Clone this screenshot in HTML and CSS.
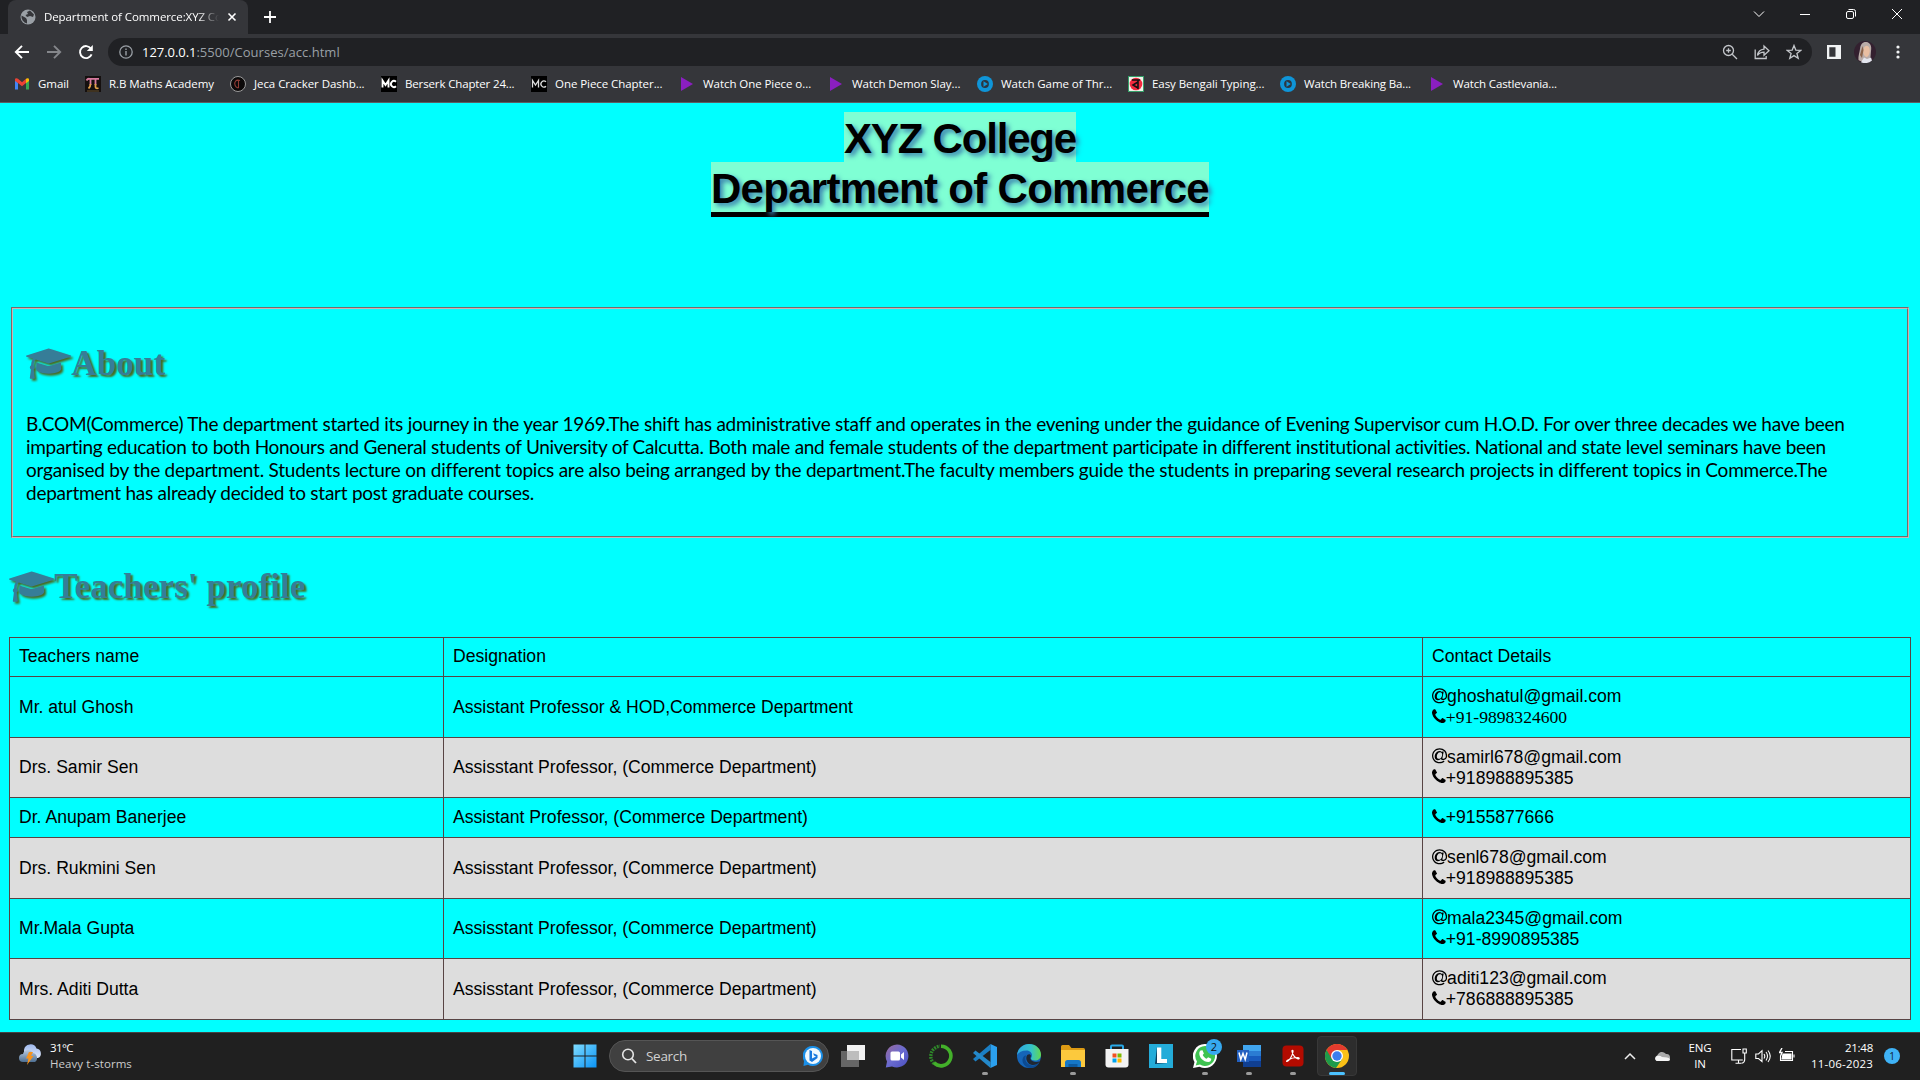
FILE: index.html
```html
<!DOCTYPE html>
<html lang="en">
<head>
<meta charset="utf-8">
<title>Department of Commerce:XYZ College</title>
<link rel="stylesheet" href="styles.css">
</head>
<body>
<svg width="0" height="0" class="defs">
  <symbol id="cap" viewBox="0 0 2304 1792"><path d="M1774 836l18 316q4 69-82 128t-235 93.500-323 34.500-323-34.500-235-93.500-82-128l18-316 574 181q22 7 48 7t48-7zM2304 512q0 23-22 31l-1120 352q-4 1-10 1t-10-1l-652-206q-43 34-71 111.500t-34 178.500q63 36 63 109 0 69-58 107l58 433q2 14-8 25-9 11-24 11h-192q-15 0-24-11-10-11-8-25l58-433q-58-38-58-107 0-73 65-111 11-207 98-330l-333-104q-22-8-22-31t22-31l1120-352q4-1 10-1t10 1l1120 352q22 8 22 31z"/></symbol>
  <symbol id="phone" viewBox="192 0 1408 1792"><path d="M1600 1240q0 27-10 70.500t-21 68.500q-21 50-122 106-94 51-186 51-27 0-53-3.500t-57.500-12.500-47-14.500-55.500-20.500-49-18q-98-35-175-83-127-79-264-216t-216-264q-48-77-83-175-3-9-18-49t-20.500-55.500-14.500-47-12.500-57.500-3.500-53q0-92 51-186 56-101 106-122 25-11 68.500-21t70.500-10q14 0 21 3 18 6 53 76 11 19 30 54t35 63.500 31 53.500q3 4 17.500 25t21.500 35.500 7 28.500q0 20-28.500 50t-62 55-62 53-28.500 46q0 9 5 22.500t8.500 20.500 14 24 11.500 19q76 137 174 235t235 174q2 1 19 11.500t24 14 20.500 8.500 22.500 5q18 0 46-28.500t53-62 55-62 50-28.500q14 0 28.500 7t35.500 21.500 25 17.500q25 15 53.500 31t63.500 35 54 30q70 35 76 53 3 7 3 21z"/></symbol>
  <symbol id="at" viewBox="128 0 1536 1792"><path d="M1164 772q0-108-53.500-169t-147.500-61q-63 0-124 30.500t-110 84.500-79.500 137-30.500 180q0 112 53.500 173t150.500 61q96 0 176-66.500t122.500-166 42.500-203.500zM1664 896q0 111-37 197t-98.500 135-131.500 74.500-145 27.500q-6 0-15.500.5t-16.500.5q-95 0-142-53-28-33-33-83-52 66-131.500 110t-173.500 44q-161 0-249.500-95.500t-88.500-269.500q0-157 66-290t179-210.500 246-77.500q87 0 155 35.500t106 99.500l2-19 11-56q1-6 5.500-12t9.500-6h118q5 0 13 11 5 5 3 16l-120 614q-5 24-5 48 0 39 12.500 52t44.500 13q28-1 57-5.500t73-24 77-50 57-89.500 24-137q0-292-174-466t-466-174q-130 0-248.500 51t-204 136.500-136.500 204-51 248.500 51 248.500 136.500 204 204 136.500 248.500 51q228 0 405-144 11-9 24-8t21 12l41 49q8 12 7 24-2 13-12 22-102 83-227.500 128t-258.500 45q-156 0-298-61t-245-164-164-245-61-298 61-298 164-245 245-164 298-61q344 0 556 212t212 556z"/></symbol>
  <symbol id="play" viewBox="0 0 16 16"><path d="M2 1l12 7-12 7z" fill="#8a1fc0"/></symbol>
  <symbol id="ring" viewBox="0 0 16 16"><circle cx="8" cy="8" r="8" fill="#0f95d8"/><circle cx="8" cy="8" r="3.900" fill="#2c3640"/><path d="M6.500 5.300L10.800 8l-4.300 2.700z" fill="#0f95d8"/></symbol>
</svg>

<header class="tabstrip">
  <div class="tab">
    <svg class="i16" viewBox="0 0 16 16"><circle cx="8" cy="8" r="7.500" fill="#9aa0a6"/><path d="M1.500 6.500L6 9l1 2v3.500A7 7 0 0 1 1.500 6.500zM7 3l3-1.500 4 4-1 2.500-3-1-3 1L5.500 6 8 5z" fill="#35363a"/></svg>
    <span class="title">Department of Commerce:XYZ Co</span>
    <svg class="close" viewBox="0 0 10 10"><path d="M1.500 1.500l7 7M8.500 1.500l-7 7" stroke="#fff" stroke-width="1.600"/></svg>
  </div>
  <svg class="plus" viewBox="0 0 12 12"><path d="M6 0v12M0 6h12" stroke="#fff" stroke-width="1.800"/></svg>
  <div class="winbtns">
    <svg viewBox="0 0 12 12"><path d="M1 3.500l5 5 5-5" /></svg>
    <svg viewBox="0 0 12 12"><path d="M1 6.500h10"/></svg>
    <svg viewBox="0 0 12 12"><rect x="1.500" y="3.500" width="7" height="7" rx="1.500"/><path d="M3.500 1.500h5a2 2 0 0 1 2 2v5"/></svg>
    <svg viewBox="0 0 12 12"><path d="M1 1l10 10M11 1L1 11"/></svg>
  </div>
</header>

<div class="toolbar">
  <div class="nav">
    <svg viewBox="0 0 16 16"><path d="M15 8H2M8 1.800L1.800 8 8 14.200" stroke="#fff"/></svg>
    <svg viewBox="0 0 16 16"><path d="M1 8h13M8 1.800L14.200 8 8 14.200" stroke="#85878b"/></svg>
    <svg viewBox="0 0 16 16"><path d="M13.600 10.300A6 6 0 1 1 13 4.700" stroke="#fff"/><path d="M14.800 1v6h-6z" fill="#fff"/></svg>
  </div>
  <div class="omnibox">
    <svg class="i14" viewBox="0 0 14 14"><circle cx="7" cy="7" r="6.200" fill="none" stroke="#9aa0a6" stroke-width="1.300"/><path d="M7 6v4.500M7 3.500v1.400" stroke="#9aa0a6" stroke-width="1.400"/></svg>
    <span class="url"><b>127.0.0.1</b>:5500/Courses/acc.html</span>
    <div class="omni-actions">
      <svg viewBox="0 0 16 16"><circle cx="6.500" cy="6.500" r="5"/><path d="M10.200 10.200L15 15M4.200 6.500h4.600M6.500 4.200v4.600"/></svg>
      <svg viewBox="0 0 16 16"><path d="M1.200 5.500v9h11V12M3.500 11.500c.5-4 3-6 6.500-6.300V2l5 4.700-5 4.500V8.200c-3 0-5 1-6.500 3.300z"/></svg>
      <svg viewBox="0 0 16 16"><path d="M8 1.500l1.800 4.600 4.900.3-3.800 3.100 1.300 4.800L8 11.600l-4.200 2.700 1.300-4.800L1.300 6.400l4.900-.3z"/></svg>
    </div>
  </div>
  <svg class="panel" viewBox="0 0 14 14"><path d="M0 0h14v14H0zM2.300 2.300v9.400h6.200V2.300z" fill="#f1f3f4" fill-rule="evenodd"/></svg>
  <svg class="avatar" viewBox="0 0 22 22"><circle cx="11" cy="11" r="11" fill="#33202f"/><path d="M4.500 19c-.5-4 1-7 1.500-11C6.500 3 9 .5 12.500 1c3.500.5 5.500 4 4.500 9l-.5 6c-1 5-8 6-12 3z" fill="#b9aca8"/><path d="M9.500 8c1-4 5-4.500 6-.5 1 4-1 8.500-3 8.500s-4-4-3-8z" fill="#e9bfa2"/><path d="M7 21.300l3-4.800 3 1.500 4-1.500 1 3a11 11 0 0 1-11 1.800z" fill="#e3e6ee"/><path d="M6 14l2.500-9 1 4-1.500 8z" fill="#8a6248"/></svg>
  <svg class="dots" viewBox="0 0 4 14"><circle cx="2" cy="2" r="1.600"/><circle cx="2" cy="7" r="1.600"/><circle cx="2" cy="12" r="1.600"/></svg>
</div>

<nav class="bookmarks">
  <a><svg viewBox="0 0 16 16"><path d="M1 3v10.500h3V7z" fill="#4285f4"/><path d="M15 3v10.500h-3V7z" fill="#34a853"/><path d="M1 3.500C1 2 3 1.800 4 2.800l4 3.400 4-3.400V7l-4 3.200L4 7 1 5z" fill="#ea4335"/><path d="M12 2.800c1-1 3-.8 3 .7V5l-3 2.200z" fill="#fbbc04"/></svg><span>Gmail</span></a>
  <a><svg viewBox="0 0 16 16"><path d="M0 0h16v16H0z" fill="#15100f"/><path d="M1.500 4.500Q2.500 2.500 4.500 2.800H14M5.500 3v6M10.500 3v6" fill="none" stroke="#d77ba0" stroke-width="1.800"/><path d="M5.500 8q0 3-2 4.500M10.500 8v3q.5 2 3 1" stroke="#e0a14a" stroke-width="1.800" fill="none"/><path d="M2 15h12" stroke="#6b5530"/></svg><span>R.B Maths Academy</span></a>
  <a><svg viewBox="0 0 16 16"><circle cx="8" cy="8" r="7.500" fill="#0b0909" stroke="#a8a8a8" stroke-width=".9"/><path d="M10 4.500C6 3 4 6 5 9s3 3 4 2.500M8.500 4v8" fill="none" stroke="#8d3b34" stroke-width="1.100"/></svg><span>Jeca Cracker Dashb...</span></a>
  <a class="tight"><svg viewBox="0 0 16 16"><path d="M0 0h16v16H0z" fill="#000"/><path d="M1.500 11.500v-7L4.500 9l3-4.500v7M15 5.800a3 3 0 1 0 0 4.400" fill="none" stroke="#fff" stroke-width="1.900"/></svg><span>Berserk Chapter 24...</span></a>
  <a><svg viewBox="0 0 16 16"><path d="M0 0h16v16H0z" fill="#000"/><path d="M1.500 11.500v-7L4.500 9l3-4.500v7M15 5.800a3 3 0 1 0 0 4.400" fill="none" stroke="#ddd" stroke-width="1.300"/></svg><span>One Piece Chapter...</span></a>
  <a><svg><use href="#play"/></svg><span>Watch One Piece o...</span></a>
  <a><svg><use href="#play"/></svg><span>Watch Demon Slay...</span></a>
  <a><svg><use href="#ring"/></svg><span>Watch Game of Thr...</span></a>
  <a><svg viewBox="0 0 16 16"><path d="M0 0h16v16H0z" fill="#35a06a"/><path d="M1 1h14v14H1z" fill="#f2f2ea"/><circle cx="8" cy="8" r="6.300" fill="#f22a3f"/><path d="M4 4h8M10 4v9M10 6L5 9l5 3" fill="none" stroke="#111" stroke-width="1.600"/></svg><span>Easy Bengali Typing...</span></a>
  <a class="tight"><svg><use href="#ring"/></svg><span>Watch Breaking Ba...</span></a>
  <a class="tight"><svg><use href="#play"/></svg><span>Watch Castlevania...</span></a>
</nav>

<main class="page">
  <h1 class="college"><span class="l1">XYZ College</span><span class="l2">Department of Commerce</span></h1>
  <section class="about">
    <h2><svg class="capicon"><use href="#cap"/></svg><span>About</span></h2>
    <p>
      <span class="p1">B.COM(Commerce) The department started its journey in the year 1969.The shift has administrative staff and operates in the evening under the guidance of Evening Supervisor cum H.O.D. For over three decades we have been</span>
      <span class="p2">imparting education to both Honours and General students of University of Calcutta. Both male and female students of the department participate in different institutional activities. National and state level seminars have been</span>
      <span class="p3">organised by the department. Students lecture on different topics are also being arranged by the department.The faculty members guide the students in preparing several research projects in different topics in Commerce.The</span>
      <span class="p4">department has already decided to start post graduate courses.</span>
    </p>
  </section>
  <h2 class="profile"><svg class="capicon"><use href="#cap"/></svg><span>Teachers' profile</span></h2>
  <table>
    <colgroup><col class="c1"><col class="c2"><col class="c3"></colgroup>
    <tr class="short head"><td>Teachers name</td><td>Designation</td><td>Contact Details</td></tr>
    <tr><td>Mr. atul Ghosh</td><td>Assistant Professor &amp; HOD,Commerce Department</td><td><svg class="at"><use href="#at"/></svg>ghoshatul@gmail.com<br><svg class="ph"><use href="#phone"/></svg><span class="serif">+91-9898324600</span></td></tr>
    <tr class="alt mid"><td>Drs. Samir Sen</td><td>Assisstant Professor, (Commerce Department)</td><td><svg class="at"><use href="#at"/></svg>samirl678@gmail.com<br><svg class="ph"><use href="#phone"/></svg>+918988895385</td></tr>
    <tr class="short s2"><td>Dr. Anupam Banerjee</td><td>Assistant Professor, (Commerce Department)</td><td><svg class="ph"><use href="#phone"/></svg>+9155877666</td></tr>
    <tr class="alt"><td>Drs. Rukmini Sen</td><td>Assisstant Professor, (Commerce Department)</td><td><svg class="at"><use href="#at"/></svg>senl678@gmail.com<br><svg class="ph"><use href="#phone"/></svg>+918988895385</td></tr>
    <tr class="mid"><td>Mr.Mala Gupta</td><td>Assisstant Professor, (Commerce Department)</td><td><svg class="at"><use href="#at"/></svg>mala2345@gmail.com<br><svg class="ph"><use href="#phone"/></svg>+91-8990895385</td></tr>
    <tr class="alt"><td>Mrs. Aditi Dutta</td><td>Assisstant Professor, (Commerce Department)</td><td><svg class="at"><use href="#at"/></svg>aditi123@gmail.com<br><svg class="ph"><use href="#phone"/></svg>+786888895385</td></tr>
  </table>
</main>

<footer class="taskbar">
  <div class="weather">
    <svg viewBox="0 0 24 24"><defs><linearGradient id="wc" x1="0" y1="0" x2="0" y2="1"><stop offset="0" stop-color="#9fb9ee"/><stop offset="1" stop-color="#dfe8f8"/></linearGradient><linearGradient id="wd" x1="0" y1="0" x2="0" y2="1"><stop offset="0" stop-color="#b9cbe2"/><stop offset="1" stop-color="#4d6f92"/></linearGradient></defs><path d="M8 14a6 6 0 0 1-3-6 6.500 6.500 0 0 1 12.500-1.500A5 5 0 0 1 19 16H9z" fill="url(#wc)"/><path d="M4 20a4 4 0 0 1 0-8 5 5 0 0 1 9.500-1A5 5 0 0 1 16 20z" fill="url(#wd)"/><path d="M10 10h4l-2 4h2.500L8 23l1.500-6.500H7z" fill="#f7941e"/></svg>
    <div><span class="temp">31°C</span><br><span class="dim">Heavy t-storms</span></div>
  </div>
  <div class="center">
    <svg class="start" viewBox="0 0 24 24"><defs><linearGradient id="wg" x1="0" y1="0" x2="1" y2="1"><stop offset="0" stop-color="#7fdcff"/><stop offset="1" stop-color="#0a93f5"/></linearGradient></defs><path d="M.5.500h11v11H.5zM12.500.500h11v11h-11zM.5 12.500h11v11H.5zM12.500 12.500h11v11h-11z" fill="url(#wg)"/></svg>
    <div class="search">
      <svg class="i16" viewBox="0 0 16 16"><circle cx="7" cy="6.500" r="5.300" fill="none" stroke="#e4e4e4" stroke-width="1.600"/><path d="M10.800 10.500L15 15" stroke="#e4e4e4" stroke-width="1.800"/></svg>
      <span>Search</span>
      <svg class="bing" viewBox="0 0 20 20"><path d="M10 0a10 10 0 1 1-5 18.700L.5 20 1 15A10 10 0 0 1 10 0z" fill="#1a8fe8"/><circle cx="10" cy="10" r="8" fill="#eef8ff"/><path d="M6.500 4l2.500 1v7.500l4-2-2-1-.8-2.200 4.300 1.600v3L9 16l-2.500-1.600z" fill="#1577dd"/></svg>
    </div>
    <div class="apps">
      <span class="app"><svg viewBox="0 0 24 24"><path d="M6 1h18v15H6z" fill="#f2f2f2"/><path d="M0 7h18v16H0z" fill="#666"/><path d="M6 7h12v9H6z" fill="#bdbdbd"/></svg></span>
      <span class="app"><svg viewBox="0 0 24 24"><defs><linearGradient id="tm" x1="0" y1="0" x2="1" y2="1"><stop offset="0" stop-color="#9b6a9c"/><stop offset=".5" stop-color="#6a6bd0"/><stop offset="1" stop-color="#4a4fc0"/></linearGradient></defs><path d="M12 .5a11.500 11.500 0 1 1-5 21.900L.8 23.500 2 17.500A11.500 11.500 0 0 1 12 .5z" fill="url(#tm)"/><rect x="5.500" y="7.500" width="9.500" height="9" rx="1.500" fill="#fff"/><path d="M16 10.500l3-2.500v8l-3-2.500z" fill="#fff"/></svg></span>
      <span class="app"><svg viewBox="0 0 24 24"><path d="M5 19.500A10 10 0 0 1 11 2.200" fill="none" stroke="#2f8a2a" stroke-width="3.400" stroke-dasharray="1.800 1"/><path d="M12 2.200a9.800 9.800 0 1 1-7 16.600" fill="none" stroke="#43b02a" stroke-width="3.600"/></svg></span>
      <span class="app run"><svg viewBox="0 0 24 24"><path d="M17.500 0v6L2.500 17.500 0 15z" fill="#1b7fc4"/><path d="M17.500 24v-6L2.500 6.500 0 9z" fill="#2489ca"/><path d="M17.500 0L24 3v18l-6.500 3z" fill="#2ba0ee"/></svg></span>
      <span class="app"><svg viewBox="0 0 24 24"><defs><linearGradient id="eg" x1="0" y1=".3" x2="1" y2=".3"><stop offset="0" stop-color="#2fa8e0"/><stop offset=".6" stop-color="#35c3c8"/><stop offset="1" stop-color="#62d84f"/></linearGradient></defs><circle cx="12" cy="12" r="12" fill="#1565b8"/><path d="M0 11C1 4 6 0 12 0c7 0 12 5 12 10.500 0 4-3 6-6 6-2.500 0-4-1-4-2s1-1.500 1-3.500S13 6.500 9.500 6.500C5 6.500 1.500 8.500 0 11z" fill="url(#eg)"/><path d="M9 11.500C7 16 10 21 15 21.500c3 .3 6-1.500 7.500-3.500-2 5-6 6-9 6C8 23.500 5 19 5.500 15.500 6 12.500 8 11 9 11.500z" fill="#0c4a91"/><path d="M13.500 15c2 3.500 6 3.500 9.500 2.300-2 3.200-5.500 4-8 3.700-4-.6-6.500-5-5.500-8.500.5-1.500 2-2.500 3.500-2 2 1 0 3 .5 4.500z" fill="#202833"/></svg></span>
      <span class="app run"><svg viewBox="0 0 24 24"><path d="M0 2.500Q0 1 1.500 1H8l2.500 3H22.500Q24 4 24 5.500V12H0z" fill="#dd9b14"/><path d="M0 6h24v17H0z" fill="#fcc93d"/><path d="M4 23v-4.500Q4 16 6.500 16h11q2.500 0 2.500 2.500V23z" fill="#1577c7"/><path d="M7.500 20h9v3h-9z" fill="#0c5a9f"/></svg></span>
      <span class="app"><svg viewBox="0 0 24 24"><path d="M6 6V2.500Q6 1.500 7 1.500h10q1 0 1 1V6" fill="none" stroke="#29a9e8" stroke-width="2"/><path d="M.5 5h23v15.500q0 3-3 3h-17q-3 0-3-3z" fill="#f3f3f3"/><path d="M7.500 9.500h4v4h-4z" fill="#f25022"/><path d="M12.500 9.500h4v4h-4z" fill="#7fba00"/><path d="M7.500 14.500h4v4h-4z" fill="#00a4ef"/><path d="M12.500 14.500h4v4h-4z" fill="#ffb900"/></svg></span>
      <span class="app"><svg viewBox="0 0 24 24"><path d="M0 0h24v24H0z" fill="#24acd9"/><path d="M8 3L6 20l12-1-9-2z" fill="#0e3e5c"/><path d="M8 3.500h4.300V15H18v4H8z" fill="#fff"/></svg></span>
      <span class="app run"><svg viewBox="0 0 24 24"><path d="M12 0a12 12 0 1 1-5.500 22.700L0 24l1.500-6A12 12 0 0 1 12 0z" fill="#fff"/><path d="M12 2a10 10 0 1 1-5 18.600L2.700 21.500 4 17.500A10 10 0 0 1 12 2z" fill="#3fc351"/><path d="M7.500 6.500l2-.3 1.400 3.200-1.200 1.500c1 2 2.200 3 4 3.800l1.400-1.500 3.200 1.500c0 2-1.300 3.300-3 3.300-5 0-9-4.500-9-8.500 0-1.300.5-2.400 1.200-3z" fill="#fff"/></svg><i class="badge">2</i></span>
      <span class="app run"><svg viewBox="0 0 24 24"><path d="M6 1h18v6H6z" fill="#41a5ee"/><path d="M6 7h18v5H6z" fill="#2b7cd3"/><path d="M6 12h18v5H6z" fill="#185abd"/><path d="M6 17h18v6H6z" fill="#103f91"/><path d="M0 6h12v12H0z" fill="#2360c0"/><path d="M2 8.500l1.800 7L6 9.500l2.200 6 1.800-7" fill="none" stroke="#fff" stroke-width="1.500"/></svg></span>
      <span class="app run"><svg viewBox="0 0 24 24"><rect x="1.500" y="1.500" width="21" height="21" rx="4" fill="#b30b00"/><path d="M6 17.500c2-.5 5.500-5.500 6-10 .2-1.700-1.300-1.500-1 0 .6 3.500 3.500 6.800 6 7.300 1.800.2 1.500-1.300-.5-1.300-3.500 0-7 1-9.500 2.500-1.500 1-1.800 1.500-1 1.500z" fill="none" stroke="#fff" stroke-width="1.200"/></svg></span>
      <span class="app active"><svg viewBox="0 0 24 24"><circle cx="12" cy="12" r="12" fill="#fbc116"/><path d="M12 12L1.600 6A12 12 0 0 0 11 24l6.200-9z" fill="#1e9b4b"/><path d="M1.600 6A12 12 0 0 1 22.400 6H12v6l-5.200 3z" fill="#e33b2e"/><circle cx="12" cy="12" r="6" fill="#fff"/><circle cx="12" cy="12" r="4.700" fill="#3b7ded"/></svg></span>
    </div>
  </div>
  <div class="tray">
    <svg class="chev" viewBox="0 0 12 8"><path d="M1 7l5-5 5 5" fill="none" stroke="#eee" stroke-width="1.500"/></svg>
    <svg class="cloud" viewBox="0 0 16 10"><path d="M3.500 10a3.500 3.500 0 0 1 0-6A5 5 0 0 1 12 3a3.500 3.500 0 0 1 1 7z" fill="#aaa"/><path d="M2.500 10a2.700 2.700 0 0 1 .5-5q3-1 5 1l5 .5q3 .5 3 2T13.500 10z" fill="#f4f4f4"/></svg>
    <div class="lang">ENG<br>IN</div>
    <svg class="i16" viewBox="0 0 16 16"><path d="M10 1.500H.8v10.500h11M4.500 15.200h6M7.500 12v3" /><path d="M12 1h3.300v4H12zM13.700 5v6.500q0 3-3 3.700"/></svg>
    <svg class="i16" viewBox="0 0 16 16"><path d="M.8 6v4.500h2.700L7 13.500V2.700L3.500 6zM9 6q1.500 2.200 0 4.500M11 4q3 4 0 8.500M13 2.500q4.500 5.500 0 11.500"/></svg>
    <svg class="i16" viewBox="0 0 16 16"><path d="M6 3.500h7.500v9H1.500V8"/><path d="M4 6h8v5H3z" fill="#fff"/><path d="M15 6.500v3"/><path d="M3 0L.5 4.500H3L1.500 8" stroke-width="1.400"/></svg>
    <div class="clock"><span class="time">21:48</span><br><span class="date">11-06-2023</span></div>
    <span class="note">1</span>
  </div>
</footer>
</body>
</html>
```
FILE: styles.css
```css
* { box-sizing: border-box; }
html, body { margin: 0; padding: 0; }
body { width: 1920px; height: 1080px; overflow: hidden; display: flex; flex-direction: column; background: #0ff; color: #000; font-family: "Open Sans", "Noto Sans", sans-serif; }
svg { display: block; flex: none; }
.defs { position: absolute; }
.i16 { width: 16px; height: 16px; }
.i14 { width: 14px; height: 14px; }

/* browser chrome */
.tabstrip { flex: none; height: 34px; background: #202124; display: flex; align-items: center; padding-left: 8px; }
.tab { width: 240px; height: 34px; background: #35363a; border-radius: 8px 8px 0 0; display: flex; align-items: center; padding: 0 11px 0 12px; gap: 8px; color: #fff; font-size: 11.5px; }
.title { flex: 1; overflow: hidden; white-space: nowrap; letter-spacing: -0.09px; padding-bottom: 1px; -webkit-mask-image: linear-gradient(90deg, #000 88%, transparent); mask-image: linear-gradient(90deg, #000 88%, transparent); }
.close { width: 10px; height: 10px; }
.plus { width: 12px; height: 12px; margin-left: 16px; }
.winbtns { margin-left: auto; display: flex; gap: 34px; padding: 0 17px 6px 0; }
.winbtns svg { width: 12px; height: 12px; fill: none; stroke: #fff; stroke-width: 1; }
.toolbar { flex: none; height: 36px; background: #35363a; display: flex; align-items: center; padding: 0 20px 0 14px; }
.nav { display: flex; gap: 16px; width: 94px; }
.nav svg { width: 16px; height: 16px; fill: none; stroke-width: 1.9; }
.omnibox { width: 1704px; height: 28px; border-radius: 14px; background: #202124; display: flex; align-items: center; padding: 0 10px 0 11px; gap: 9px; }
.url { color: #9aa0a6; font-size: 13px; letter-spacing: 0.03px; white-space: nowrap; }
.url b { font-weight: 400; color: #fff; letter-spacing: -0.05px; }
.omni-actions { margin-left: auto; display: flex; gap: 16px; }
.omni-actions svg { width: 16px; height: 16px; fill: none; stroke: #c3c6ca; stroke-width: 1.3; }
.panel { width: 14px; height: 14px; margin-left: 15px; }
.avatar { width: 22px; height: 22px; margin-left: 13px; }
.dots { width: 4px; height: 14px; margin-left: auto; fill: #f1f3f4; }
.bookmarks { flex: none; height: 33px; background: #35363a; border-bottom: 1px solid #5c5d62; padding: 0 0 4px 14px; display: grid; grid-template-columns: 71px 145px 151px 150px 148px 149px 149px 151px 152px 149px 150px; align-items: center; color: #fff; font-size: 11.5px; letter-spacing: -0.06px; }
.bookmarks a { display: flex; align-items: center; gap: 8px; white-space: nowrap; }
.bookmarks span { padding-bottom: 2px; }
.bookmarks .tight { letter-spacing: -0.14px; }
.bookmarks svg { width: 16px; height: 16px; }

/* page */
.page { flex: 1; padding: 9px 9px 0; display: flex; flex-direction: column; overflow: hidden; }
.college { margin: 0; display: flex; flex-direction: column; align-items: center; font: bold 42px/53px "Liberation Sans", sans-serif; text-shadow: 3px 3px 5px #3a7fae; white-space: nowrap; }
.college span { display: block; height: 50px; background: #7fffd4; }
.college .l1 { letter-spacing: -1.19px; }
.college .l2 { height: 55px; border-bottom: 5px solid #000; letter-spacing: -0.7px; }
.about { margin: 90px 2px 0; height: 231px; border: 2px groove #cdb4b4; padding: 35px 13px 0; }
h2 { margin: 0; display: flex; align-items: center; font: bold 35.2px/40px "Liberation Serif", serif; color: #367d98; text-shadow: 2px 2px 2px #4a6a20; white-space: nowrap; }
.capicon { width: 45.3px; height: 35.2px; fill: #367d98; filter: drop-shadow(2px 2px 1px #4a6a20); }
.about p { margin: 28px 0 0; font: 19px/23px Lato, sans-serif; }
.about p span { display: table; white-space: nowrap; }
.p1 { letter-spacing: -0.246px; }
.p2 { letter-spacing: -0.301px; }
.p3 { letter-spacing: -0.236px; }
.p4 { letter-spacing: -0.256px; }
.profile { margin-top: 29px; }
table { margin-top: 30px; width: 1902px; border-collapse: collapse; table-layout: fixed; font: 17.6px/21px "Liberation Sans", sans-serif; }
.c1 { width: 434px; }
.c2 { width: 979px; }
td { border: 1px solid #584444; padding: 0 9px; height: 61px; white-space: nowrap; }
.short td { height: 39px; }
.head td { padding-bottom: 2px; }
.s2 td { height: 40px; }
.mid td { height: 60px; }
.alt { background: #ddd; }
td svg { display: inline-block; vertical-align: -2.5px; height: 17.6px; }
.at { width: 15.1px; }
.ph { width: 13.8px; }
.serif { font-family: "Liberation Serif", serif; }

/* taskbar */
.taskbar { flex: none; height: 48px; background: #202020; border-top: 1px solid #444; display: flex; color: #fff; font-size: 11.5px; line-height: 16px; }
.weather { display: flex; gap: 7px; padding: 7px 0 0 19px; width: 573px; }
.weather svg { width: 24px; height: 24px; margin-top: 2px; }
.temp { letter-spacing: -0.58px; }
.dim { color: #ccc; letter-spacing: 0.07px; }
.center { display: flex; align-items: center; padding-bottom: 1px; }
.start { width: 24px; height: 24px; }
.search { width: 220px; height: 32px; margin-left: 12px; border-radius: 16px; background: #404040; border: 1px solid #555; display: flex; align-items: center; padding: 0 5px 0 11px; gap: 9px; font-size: 13.5px; letter-spacing: -0.29px; color: #d2d2d2; }
.bing { width: 20px; height: 20px; margin-left: auto; }
.apps { display: flex; gap: 4px; margin-left: 4px; }
.app { position: relative; width: 40px; height: 40px; display: flex; align-items: center; justify-content: center; border-radius: 4px; }
.app svg { width: 24px; height: 24px; }
.run::after, .active::after { content: ""; position: absolute; bottom: 1px; left: 17px; width: 6px; height: 3px; border-radius: 2px; background: #9a9a9a; }
.active { background: #2d2d2d; border: 1px solid #383838; }
.active::after { left: 11px; bottom: 0; width: 16px; background: #4cc2ff; }
.badge { position: absolute; right: 3px; top: 3px; width: 16px; height: 16px; border-radius: 8px; background: #36a9f0; color: #111; font-style: normal; text-align: center; font-size: 11px; }
.tray { margin-left: auto; display: flex; align-items: center; padding: 0 20px 1px 0; }
.tray > .i16 { margin-right: 8px; fill: none; stroke: #fff; stroke-width: 1.1; }
.chev { width: 12px; height: 8px; }
.cloud { width: 16px; height: 10px; margin-left: 18px; }
.lang { text-align: center; width: 24px; margin: 0 19px 0 18px; letter-spacing: -0.1px; }
.clock { text-align: right; width: 70px; margin-right: 11px; }
.time { letter-spacing: -0.26px; }
.date { letter-spacing: 0.2px; }
.note { width: 16px; height: 16px; border-radius: 8px; background: #3fb3f7; color: #123; text-align: center; font-size: 10px; }
```
